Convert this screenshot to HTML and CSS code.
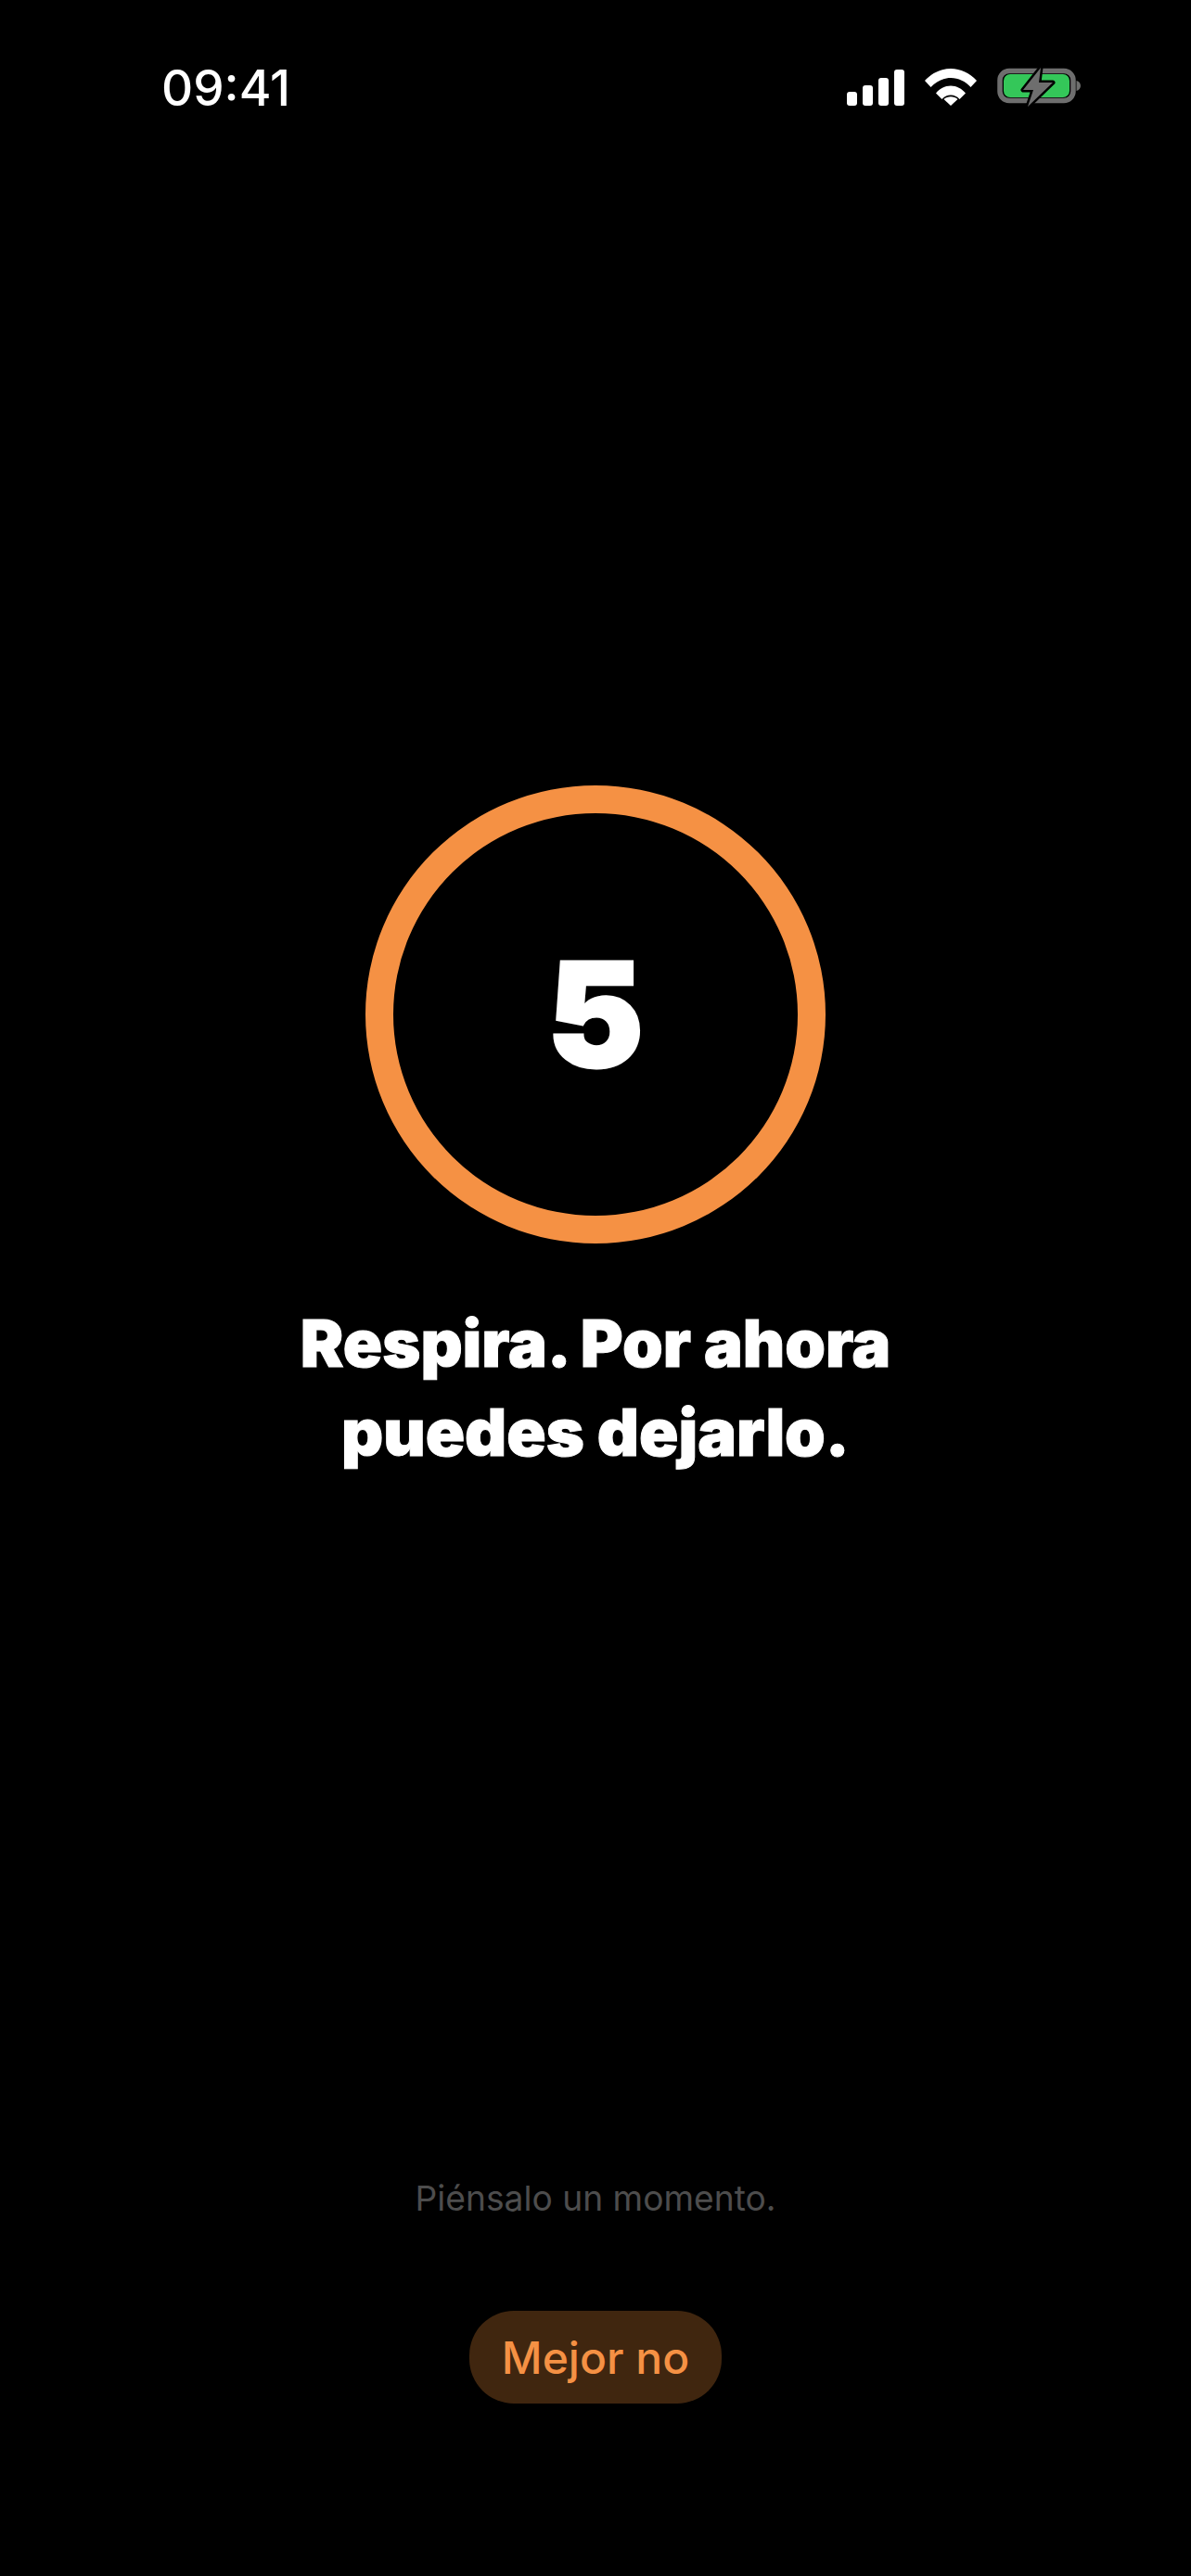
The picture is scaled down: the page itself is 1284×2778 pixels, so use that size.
FILE: index.html
```html
<!DOCTYPE html>
<html lang="es">
<head>
	<meta charset="UTF-8">
	<title>Respira</title>
	<link rel="stylesheet" href="styles.css">
</head>
<body>
	<div class="screen">
		<div class="status">
			<span class="time">09:41</span>
			<div class="status-icons">
				<svg class="signal" width="62" height="39" viewBox="0 0 62 39">
					<rect x="0" y="24" width="11" height="15" rx="3" fill="#fff"/>
					<rect x="17" y="17" width="11" height="22" rx="3" fill="#fff"/>
					<rect x="34" y="9" width="11" height="30" rx="3" fill="#fff"/>
					<rect x="51" y="0" width="11" height="39" rx="3" fill="#fff"/>
				</svg>
				<svg class="wifi" width="56" height="40" viewBox="0 0 56 40">
					<path d="M0 13C7.500 4.800 17.300 0 28 0s20.500 4.800 28 13l-6.500 7C43.800 13.800 36.300 10 28 10S12.200 13.800 6.500 20z" fill="#fff"/>
					<path d="M12 26.500C16 21.500 21.800 18.500 28 18.500s12 3 16 8l-6.500 6.500C35 30.200 31.700 28.500 28 28.500S21 30.200 18.500 33z" fill="#fff"/>
					<path d="M20.500 33c2-1.800 4.700-2.800 7.500-2.800s5.500 1 7.500 2.800L28 40z" fill="#fff"/>
				</svg>
				<svg class="battery" width="90" height="44" viewBox="0 0 90 44">
					<rect x="3" y="4.500" width="79" height="32" rx="10" fill="none" stroke="#6e6e6e" stroke-width="5.500"/>
					<rect x="7" y="8" width="71" height="25" rx="7" fill="#34c759"/>
					<path d="M85.500 15c2.800.8 4.500 3 4.500 5.500s-1.700 4.700-4.500 5.500z" fill="#6e6e6e"/>
					<path d="M47 1 28 25h11l-6 18 27-26H45z" fill="#6e6e6e" stroke="#000" stroke-width="5" stroke-linejoin="round" paint-order="stroke"/>
				</svg>
			</div>
		</div>

		<div class="center">
			<div class="ring"><span class="count">5</span></div>
			<h1 class="title">Respira. Por ahora<br>puedes dejarlo.</h1>
		</div>

		<div class="bottom">
			<p class="hint">Piénsalo un momento.</p>
			<button class="btn">Mejor no</button>
		</div>
	</div>
</body>
</html>
```

FILE: styles.css
```css
* {
	box-sizing: border-box;
}
html, body {
	margin: 0;
	background: #000;
}
.screen {
	width: 1284px;
	height: 2778px;
	display: flex;
	flex-direction: column;
	align-items: center;
	font-family: Inter, "Liberation Sans", sans-serif;
	color: #fff;
}
.status {
	width: 100%;
	height: 847px;
	padding: 63px 119px 0 174px;
	display: flex;
	justify-content: space-between;
	align-items: flex-start;
}
.time {
	font-size: 53px;
	line-height: 64px;
	font-weight: 500;
}
.status-icons {
	display: flex;
	align-items: center;
	gap: 22px;
	padding-top: 9px;
}
.status-icons svg {
	display: block;
}
.center {
	display: flex;
	flex-direction: column;
	align-items: center;
}
.ring {
	width: 496px;
	height: 494px;
	border: 30px solid #f59144;
	border-radius: 50%;
	display: flex;
	align-items: center;
	justify-content: center;
}
.count {
	font-size: 156px;
	line-height: 1;
	font-weight: 900;
	-webkit-text-stroke: 3px #fff;
}
.title {
	margin: 60px 0 0;
	font-size: 70px;
	line-height: 96px;
	font-weight: 900;
	text-align: center;
	-webkit-text-stroke: 1px #fff;
}
.bottom {
	margin-top: auto;
	padding-bottom: 186px;
	display: flex;
	flex-direction: column;
	align-items: center;
}
.hint {
	margin: 0 0 97px;
	font-size: 37.200px;
	line-height: 48px;
	color: #4d4d4d;
}
.btn {
	width: 272px;
	height: 100px;
	padding: 0;
	border: 0;
	border-radius: 48px;
	background: #40260f;
	color: #f59144;
	font-family: inherit;
	font-size: 48px;
	font-weight: 500;
}
```
